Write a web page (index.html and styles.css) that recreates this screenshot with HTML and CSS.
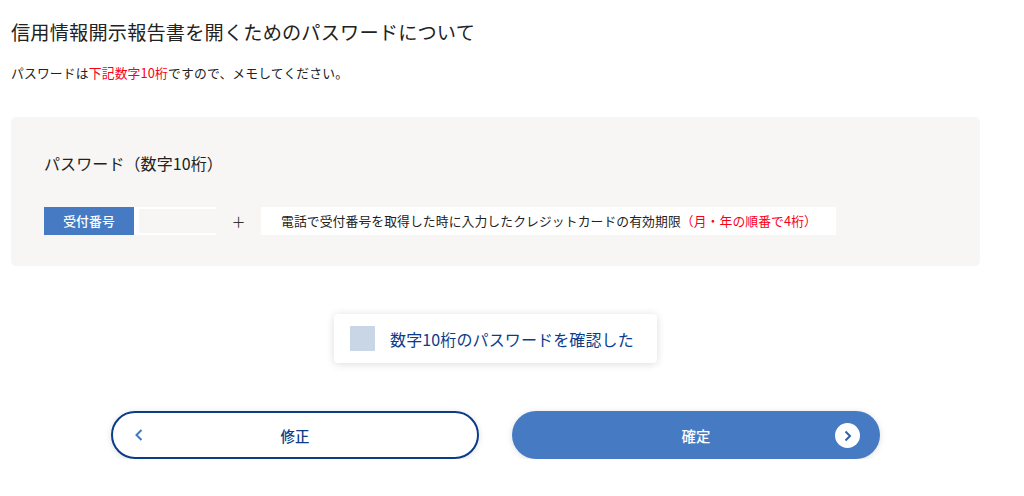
FILE: index.html
```html
<!DOCTYPE html>
<html lang="ja">
<head>
    <meta charset="UTF-8">
    <meta name="viewport" content="width=device-width, initial-scale=1.0">
    <title>パスワードについて</title>
    <link rel="stylesheet" href="styles.css">
</head>
<body>

    <div class="main-container">
        <h2 class="page-title">信用情報開示報告書を開くためのパスワードについて</h2>
        <p class="lead">パスワードは<span class="red">下記数字10桁</span>ですので、メモしてください。</p>

        <div class="password-panel">
            <h3 class="panel-title">パスワード（数字10桁）</h3>
            <div class="formula">
                <div class="number-label">受付番号</div>
                <div class="number-value"><div class="number-inner"></div></div>
                <div class="plus">＋</div>
                <div class="card-note">電話で受付番号を取得した時に入力したクレジットカードの有効期限<span class="red">（月・年の順番で4桁）</span></div>
            </div>
        </div>

        <div class="confirm-row">
            <label class="confirm-box">
                <span class="check"></span>
                <span class="confirm-text">数字10桁のパスワードを確認した</span>
            </label>
        </div>

        <div class="button-row">
            <button class="btn btn-back">
                <svg class="back-icon" width="10" height="14" viewBox="0 0 10 14"><path d="M7.5 2 L2.5 7 L7.5 12" fill="none" stroke="#3f78c4" stroke-width="2"/></svg>
                修正
            </button>
            <button class="btn btn-next">
                確定
                <span class="next-icon">
                    <svg width="10" height="12" viewBox="0 0 10 12"><path d="M2.5 1.5 L7 6 L2.5 10.5" fill="none" stroke="#2d63ad" stroke-width="2"/></svg>
                </span>
            </button>
        </div>
    </div>

</body>
</html>
```

FILE: styles.css
```css
body {
    font-family: "Noto Sans CJK JP", "Noto Sans", sans-serif;
    margin: 0;
    padding: 0;
    background-color: #fff;
    color: #222;
}

.main-container {
    width: 969px;
    margin-left: 11px;
}

.page-title {
    font-size: 19.2px;
    font-weight: 400;
    letter-spacing: 0.17px;
    line-height: 28px;
    margin: 0;
    padding-top: 18px;
}

.lead {
    font-size: 12.8px;
    letter-spacing: 0.16px;
    line-height: 20px;
    margin: 0;
    padding-top: 17px;
}

.red {
    color: #fa0016;
}

.password-panel {
    margin-top: 34px;
    height: 149px;
    box-sizing: border-box;
    padding: 34px 33px 0;
    background-color: #f7f6f5;
    border-radius: 5px;
}

.panel-title {
    font-size: 16px;
    font-weight: 400;
    letter-spacing: 0.1px;
    line-height: 24px;
    margin: 0 0 32px;
}

.formula {
    display: flex;
    height: 28px;
    font-size: 12.8px;
}

.number-label {
    width: 90px;
    background-color: #467bc4;
    color: #fff;
    font-weight: 500;
    letter-spacing: 0.1px;
    line-height: 28px;
    text-align: center;
}

.number-value {
    width: 82px;
    box-sizing: border-box;
    padding: 2px 0 2px 5px;
    background-color: #fff;
}

.number-inner {
    height: 100%;
    background-color: #f7f6f5;
}

.plus {
    width: 45px;
    text-align: center;
    line-height: 28px;
    font-size: 14px;
    color: #333;
}

.card-note {
    width: 575px;
    box-sizing: border-box;
    padding-left: 20px;
    background-color: #fff;
    letter-spacing: 0.1px;
    line-height: 28px;
}

.confirm-row {
    display: flex;
    justify-content: center;
    margin-top: 48px;
}

.confirm-box {
    display: flex;
    align-items: center;
    gap: 15px;
    width: 323px;
    height: 49px;
    box-sizing: border-box;
    padding-left: 16px;
    background-color: #fff;
    border-radius: 4px;
    box-shadow: 0 1px 8px rgba(0, 0, 0, 0.14);
}

.check {
    width: 25px;
    height: 25px;
    background-color: #c8d6e6;
    border-radius: 1px;
}

.confirm-text {
    font-size: 16px;
    font-weight: 400;
    letter-spacing: 0.13px;
    color: #0b3c8a;
}

.button-row {
    display: flex;
    gap: 33px;
    margin-top: 48px;
    padding-left: 100px;
}

.btn {
    position: relative;
    width: 368px;
    height: 48px;
    box-sizing: border-box;
    border-radius: 24px;
    font-family: inherit;
    font-size: 14.4px;
    font-weight: 500;
    box-shadow: 0 1px 6px rgba(0, 0, 0, 0.13);
}

.btn-back {
    background-color: #fff;
    border: 2px solid #0b3c8a;
    color: #0b3c8a;
}

.btn-next {
    background-color: #467bc4;
    border: none;
    color: #fff;
}

.back-icon {
    position: absolute;
    left: 21px;
    top: 15px;
}

.next-icon {
    position: absolute;
    right: 20px;
    top: 12px;
    width: 25px;
    height: 25px;
    display: flex;
    align-items: center;
    justify-content: center;
    background-color: #fff;
    border-radius: 50%;
}
```
